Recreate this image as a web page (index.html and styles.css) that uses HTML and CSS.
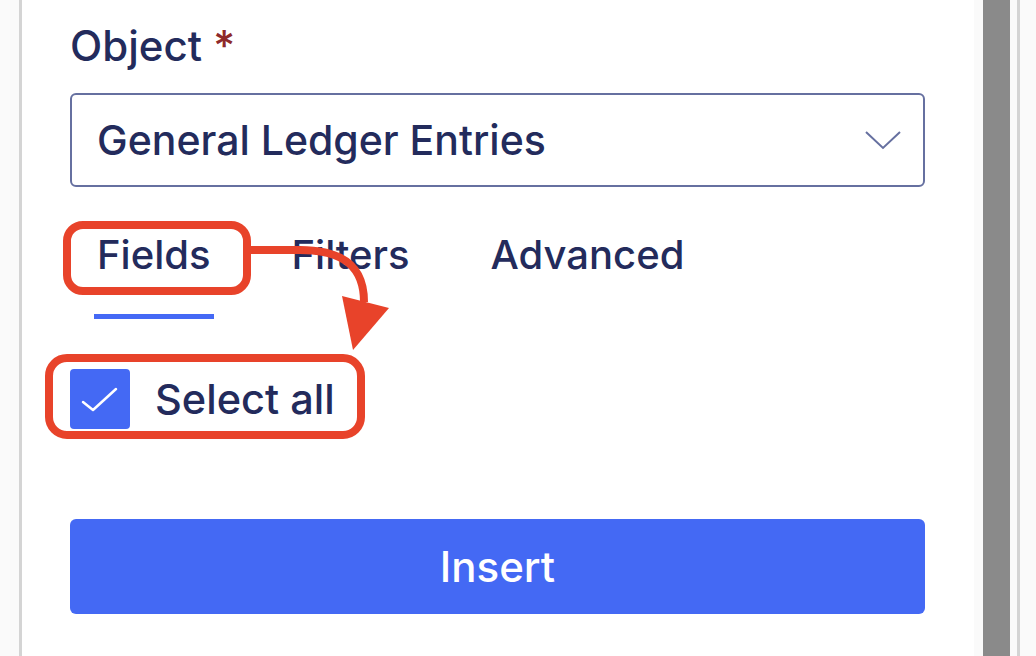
FILE: index.html
```html
<!DOCTYPE html>
<html lang="en">
<head>
<meta charset="utf-8">
<title>Object</title>
<link rel="stylesheet" href="styles.css">
</head>
<body>
<div class="page">
  <div class="gutter-left"></div>
  <main class="panel">
    <label class="field-label">Object <span class="req">*</span></label>
    <div class="select">
      <span class="select-value">General Ledger Entries</span>
      <svg class="chevron" width="36" height="20" viewBox="0 0 36 20"><path d="M1 2 L18 18 L35 2" fill="none" stroke="#6670a0" stroke-width="2"/></svg>
    </div>
    <nav class="tabs">
      <span class="tab active">Fields</span>
      <span class="tab">Filters</span>
      <span class="tab">Advanced</span>
    </nav>
    <div class="check-row">
      <span class="checkbox">
        <svg width="60" height="60" viewBox="0 0 60 60"><path d="M13 33 L23 41 L46 20" fill="none" stroke="#fff" stroke-width="2.5" stroke-linecap="round" stroke-linejoin="round"/></svg>
      </span>
      <span class="check-label">Select all</span>
    </div>
    <button class="insert">Insert</button>
  </main>
  <div class="gap-right"></div>
  <div class="scrollbar"></div>
  <div class="gap-right2"></div>
  <div class="edge-right"></div>
</div>
<svg class="annot" width="1036" height="656" viewBox="0 0 1036 656">
  <rect x="67" y="225" width="180" height="66" rx="16" fill="none" stroke="#e8432a" stroke-width="8"/>
  <rect x="49" y="358" width="312" height="77" rx="18" fill="none" stroke="#e8432a" stroke-width="8"/>
  <path d="M250 250 L300 250 C345 250 364 268 364 302" fill="none" stroke="#e8432a" stroke-width="8"/>
  <polygon points="342,296 389,308 353,350" fill="#e8432a"/>
</svg>
</body>
</html>
```

FILE: styles.css
```css
html, body {
  margin: 0;
  padding: 0;
  background: #fafafa;
  font-family: Inter, "Noto Sans", sans-serif;
  color: #232b5c;
}
body {
  position: relative;
  width: 1036px;
  height: 656px;
  overflow: hidden;
}
.page {
  display: flex;
  height: 656px;
}
.gutter-left {
  width: 19px;
  background: #fafafa;
  border-right: 3px solid #d4d4d4;
}
.panel {
  width: 855px;
  background: #fff;
  padding: 22px 49px 0 48px;
  display: flex;
  flex-direction: column;
}
.field-label {
  font-size: 42px;
  font-weight: 450;
  line-height: 48px;
  margin-bottom: 23px;
}
.req {
  color: #8e2a2a;
  font-weight: 500;
}
.select {
  height: 90px;
  border: 2px solid #6670a0;
  border-radius: 6px;
  display: flex;
  align-items: center;
  justify-content: space-between;
  padding: 0 22px 0 25px;
}
.select-value {
  font-size: 41px;
  font-weight: 450;
}
.chevron {
  display: block;
}
.tabs {
  display: flex;
  gap: 75px;
  padding-left: 24px;
}
.tab {
  font-size: 40px;
  font-weight: 450;
  line-height: 48px;
  padding: 44px 3px 35px;
  border-bottom: 5px solid transparent;
}
.tab.active {
  border-bottom-color: #4569f5;
}
.check-row {
  display: flex;
  align-items: center;
  gap: 25px;
  margin-top: 50px;
  height: 60px;
}
.checkbox {
  width: 60px;
  height: 60px;
  border-radius: 4px;
  background: #4469f4;
  display: block;
}
.checkbox svg {
  display: block;
}
.check-label {
  font-size: 41.5px;
  font-weight: 450;
}
.insert {
  margin-top: 90px;
  height: 95px;
  border: none;
  border-radius: 6px;
  background: #4469f4;
  color: #fff;
  font-family: Inter, "Noto Sans", sans-serif;
  font-size: 42px;
  font-weight: 500;
}
.gap-right {
  width: 9px;
  background: #fafafa;
}
.scrollbar {
  width: 27px;
  background: #8a8a8a;
}
.gap-right2 {
  width: 7px;
  background: #fafafa;
}
.edge-right {
  width: 3px;
  background: #d4d4d4;
}
.annot {
  position: absolute;
  left: 0;
  top: 0;
  pointer-events: none;
}
```
